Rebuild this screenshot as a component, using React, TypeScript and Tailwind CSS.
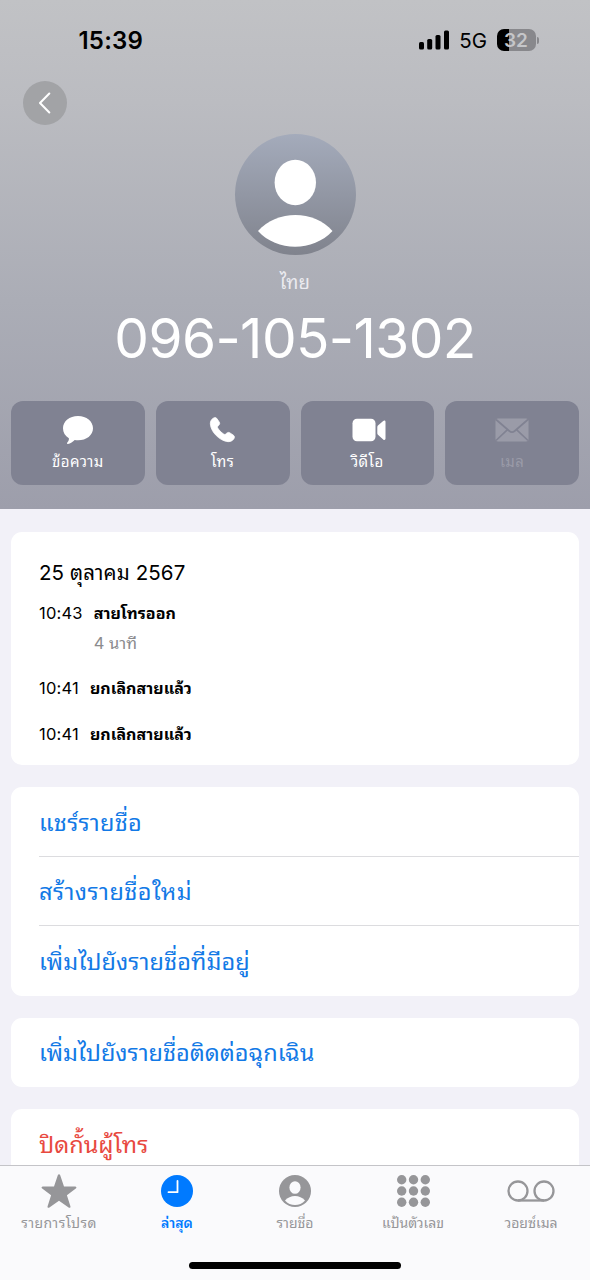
import { ReactNode } from 'react';
import clsx from 'clsx';

interface ActionProps {
  label: string;
  disabled?: boolean;
  children: ReactNode;
}

const ActionButton: React.FC<ActionProps> = ({
  label,
  disabled = false,
  children,
}) => (
  <button
    type="button"
    disabled={disabled}
    className={clsx(
      'flex h-[84px] flex-1 flex-col items-center rounded-[12px] bg-[#808292] pt-[12px]',
      disabled ? 'text-[#9a9ba8]' : 'text-white'
    )}
  >
    <span className="flex h-[34px] items-center">{children}</span>
    <span className="mt-[3px] text-[15px] leading-[24px] tracking-[0.4px] whitespace-nowrap">
      {label}
    </span>
  </button>
);

interface CallProps {
  time: string;
  title: string;
  duration?: string;
}

const CallRow: React.FC<CallProps> = ({ time, title, duration }) => (
  <div className="flex gap-[11px] leading-[29.5px]">
    <div className="text-[16.5px] tracking-[0.2px]">{time}</div>
    <div>
      <div className="text-[16px] font-bold whitespace-nowrap">{title}</div>
      {duration && (
        <div className="text-[16.5px] text-[#8b8b8e]">{duration}</div>
      )}
    </div>
  </div>
);

interface TabProps {
  label: string;
  active?: boolean;
  spacing?: string;
  children: ReactNode;
}

const Tab: React.FC<TabProps> = ({
  label,
  active = false,
  spacing,
  children,
}) => (
  <div
    className={clsx(
      'flex w-[118px] flex-col items-center',
      active ? 'font-semibold text-[#007aff]' : 'text-[#969699]'
    )}
  >
    <span className="flex h-[38px] items-center">{children}</span>
    <span
      className={clsx(
        'mt-[2px] text-[14px] leading-[22px] whitespace-nowrap',
        spacing
      )}
    >
      {label}
    </span>
  </div>
);

const StatusBar: React.FC = () => (
  <div className="flex h-[80px] items-center justify-between pr-[51px] pl-[78.5px] text-black">
    <div className="pt-[2px] text-[24px] font-semibold tracking-[0.2px]">
      15:39
    </div>
    <div className="flex items-center">
      <svg width="31" height="20" viewBox="0 0 31 20" fill="currentColor">
        <rect x="0" y="12" width="5" height="7.500" rx="1.500" />
        <rect x="8.200" y="9" width="5" height="10.500" rx="1.500" />
        <rect x="16.500" y="5" width="5" height="14.500" rx="1.500" />
        <rect x="25" y="0.500" width="5" height="19" rx="1.500" />
      </svg>
      <div className="ml-[9px] pt-[2px] text-[20.5px]">5G</div>
      <div className="ml-[9.5px] flex h-[22px] w-[39px] items-center justify-center rounded-[7px] bg-[linear-gradient(90deg,#000_32%,#88888c_32%)] pt-[1px] text-[19px] leading-[21px] font-semibold text-[#c5c6c9]">
        32
      </div>
      <div className="ml-[1px] h-[7px] w-[2.5px] rounded-r-full bg-[#88888c]" />
    </div>
  </div>
);

const links = [
  { label: 'แชร์รายชื่อ', spacing: 'tracking-[0.25px]' },
  { label: 'สร้างรายชื่อใหม่', spacing: 'tracking-[0.45px]' },
  { label: 'เพิ่มไปยังรายชื่อที่มีอยู่', spacing: 'tracking-[0.1px]' },
];

const App: React.FC = () => (
  <div className="flex h-[1280px] w-[590px] flex-col overflow-hidden bg-[#f2f1f8] font-[Inter,'Noto_Sans_Thai_Looped','Noto_Looped_Thai',Loma,Waree,'Noto_Sans_Thai','Noto_Sans',sans-serif] text-black">
    <header className="h-[508.5px] shrink-0 bg-[linear-gradient(180deg,#c1c2c5_0%,#bbbcc1_20%,#abadb6_59%,#9d9eab_100%)]">
      <StatusBar />
      <button
        type="button"
        className="mt-[1px] ml-[23px] flex size-[44px] items-center justify-center rounded-full bg-[#a2a3a6] text-white"
      >
        <svg
          width="12"
          height="22"
          viewBox="0 0 12 22"
          fill="none"
          stroke="currentColor"
          strokeWidth="2"
          strokeLinecap="round"
          strokeLinejoin="round"
        >
          <path d="M10.300 1.500 1 11l9.300 9.500" />
        </svg>
      </button>
      <div className="mt-[9px] flex flex-col items-center text-white">
        <div className="size-[121px] rounded-full bg-[linear-gradient(180deg,#a4abbb,#80838d)]">
          <svg
            width="121"
            height="121"
            viewBox="0 0 121 121"
            fill="currentColor"
          >
            <ellipse cx="60.300" cy="48.500" rx="20.700" ry="22.700" />
            <path d="M23 97C42 75.500 79 75.500 97.500 97 78 118 42 118 23 97Z" />
          </svg>
        </div>
        <div className="mt-[13px] text-[18.5px] leading-[28px] tracking-[0.3px] text-[#ebebf0]">
          ไทย
        </div>
        <div className="mt-[8px] text-[55px] leading-[68px] tracking-[-0.6px] whitespace-nowrap">
          096-105-1302
        </div>
      </div>
      <div className="mt-[29px] flex gap-[11px] px-[11px]">
        <ActionButton label="ข้อความ">
          <svg width="32" height="30" viewBox="0 0 32 30" fill="currentColor">
            <path d="M16 1C24.500 1 31 6.300 31 13.200S24.500 25.300 16 25.300c-1.200 0-2.300-.1-3.300-.3-1.700 1.800-4.300 3.700-6.800 3.900-.9.100-1.200-.8-.6-1.400 1.300-1.400 1.700-2.700 1.600-4.300C3.100 21 1 17.400 1 13.200 1 6.300 7.500 1 16 1Z" />
          </svg>
        </ActionButton>
        <ActionButton label="โทร">
          <svg
            width="28"
            height="28"
            viewBox="0 0 28 28"
            fill="currentColor"
            stroke="currentColor"
            strokeWidth="0.8"
          >
            <path d="M4.300 2.200c1.600-1 2.900-.7 3.900.8l2 3c.8 1.300.5 2.300-.5 3.300l-.9 1c-.5.600-.4 1.200.1 2 1.200 2 3.600 4.400 5.700 5.700.8.500 1.500.6 2.100.1l1-.9c1-.9 2-1.100 3.200-.3l3.200 2.100c1.500 1 1.700 2.200.8 3.700-1.500 2.400-4.100 3.400-7.200 2.800-7.500-1.500-14.900-8.900-16.200-16.200-.6-3.100.3-5.600 2.800-7.100Z" />
          </svg>
        </ActionButton>
        <ActionButton label="วิดีโอ">
          <svg
            className="ml-[3px]"
            width="34"
            height="24"
            viewBox="0 0 34 24"
            fill="currentColor"
          >
            <rect x="0.500" y="0.800" width="23" height="22.500" rx="4.500" />
            <path d="M25.300 9.200v6c0 .8.300 1.400.9 1.900l5 4.300c1 .9 2.300.6 2.300-.9V3.900c0-1.500-1.300-1.800-2.300-.9l-5 4.300c-.6.500-.9 1.100-.9 1.900Z" />
          </svg>
        </ActionButton>
        <ActionButton label="เมล" disabled>
          <svg width="34" height="24" viewBox="0 0 34 24">
            <rect
              x="0.500"
              y="0.500"
              width="33"
              height="23"
              rx="2.500"
              fill="currentColor"
            />
            <path
              d="M1 1.500 14.300 13c1.800 1.500 3.600 1.500 5.400 0L33 1.500M1 22.500l11.500-10.800M33 22.500 21.500 11.700"
              fill="none"
              stroke="#808292"
              strokeWidth="1.700"
            />
          </svg>
        </ActionButton>
      </div>
    </header>

    <main className="flex min-h-0 flex-1 flex-col gap-[22px] overflow-hidden px-[11px] pt-[23.5px]">
      <section className="h-[233px] shrink-0 rounded-[11px] bg-white px-[28px] pt-[26px]">
        <h2 className="text-[20.5px] leading-[30px] tracking-[0.1px]">
          25 ตุลาคม 2567
        </h2>
        <div className="mt-[11px] flex flex-col gap-[16px]">
          <CallRow time="10:43" title="สายโทรออก" duration="4 นาที" />
          <CallRow time="10:41" title="ยกเลิกสายแล้ว" />
          <CallRow time="10:41" title="ยกเลิกสายแล้ว" />
        </div>
      </section>

      <section className="h-[209px] shrink-0 rounded-[11px] bg-white pl-[28px] text-[23.5px] text-[#1279e6]">
        {links.map(({ label, spacing }, i) => (
          <div
            key={label}
            className={clsx(
              'flex items-center pt-[2px] whitespace-nowrap',
              i < 2 ? 'h-[69.5px] border-b border-[#dcdcdf]' : 'h-[70px]',
              spacing
            )}
          >
            {label}
          </div>
        ))}
      </section>

      <section className="flex h-[69px] shrink-0 items-center rounded-[11px] bg-white px-[28px] pt-[1px] text-[23.5px] whitespace-nowrap text-[#1279e6]">
        เพิ่มไปยังรายชื่อติดต่อฉุกเฉิน
      </section>

      <section className="flex h-[69px] shrink-0 items-center rounded-[11px] bg-white px-[28px] pt-[2px] text-[23.5px] whitespace-nowrap text-[#e8493f]">
        ปิดกั้นผู้โทร
      </section>
    </main>

    <nav className="flex h-[115px] shrink-0 flex-col items-center border-t border-[#c4c4c8] bg-[#fafafc]">
      <div className="flex w-full flex-1 pt-[6px]">
        <Tab label="รายการโปรด" spacing="tracking-[0.4px]">
          <svg width="36" height="36" viewBox="0 0 36 36" fill="currentColor">
            <path d="M16.800 2.200c.5-1.300 1.900-1.300 2.400 0l3.800 11.200h11.100c1.400 0 1.800 1.300.7 2.100l-8.900 6.700 3.500 11c.4 1.300-.7 2.100-1.800 1.300L18 27.700l-9.600 6.800c-1.100.8-2.200 0-1.800-1.300l3.500-11-8.900-6.700c-1.100-.8-.7-2.100.7-2.100H13L16.800 2.200Z" />
          </svg>
        </Tab>
        <Tab label="ล่าสุด" active>
          <svg width="32" height="32" viewBox="0 0 32 32">
            <circle cx="16" cy="16" r="16" fill="currentColor" />
            <path
              d="M16.500 6v11.200H7.500"
              fill="none"
              stroke="#fff"
              strokeWidth="1.800"
              strokeLinecap="round"
              strokeLinejoin="round"
            />
          </svg>
        </Tab>
        <Tab label="รายชื่อ">
          <svg width="32" height="32" viewBox="0 0 32 32">
            <circle cx="16" cy="16" r="16" fill="currentColor" />
            <ellipse cx="16" cy="12.500" rx="5.600" ry="6.300" fill="#fafafc" />
            <path d="M6 25.500c5-6 15-6 20 0-5 6-15 6-20 0Z" fill="#fafafc" />
          </svg>
        </Tab>
        <Tab label="แป้นตัวเลข">
          <svg width="33" height="32" viewBox="0 0 33 32" fill="currentColor">
            {[4.7, 16, 27.3].map((cy) =>
              [4.7, 16.5, 28.3].map((cx) => (
                <circle key={`${cx}-${cy}`} cx={cx} cy={cy} r="4.700" />
              ))
            )}
          </svg>
        </Tab>
        <Tab label="วอยซ์เมล">
          <svg
            width="48"
            height="22"
            viewBox="0 0 48 22"
            fill="none"
            stroke="currentColor"
            strokeWidth="2.300"
          >
            <circle cx="11" cy="11" r="9.500" />
            <circle cx="37" cy="11" r="9.500" />
            <path d="M11 20.500h26" />
          </svg>
        </Tab>
      </div>
      <div className="mb-[11px] h-[7px] w-[212px] rounded-full bg-black" />
    </nav>
  </div>
);

export default App;
